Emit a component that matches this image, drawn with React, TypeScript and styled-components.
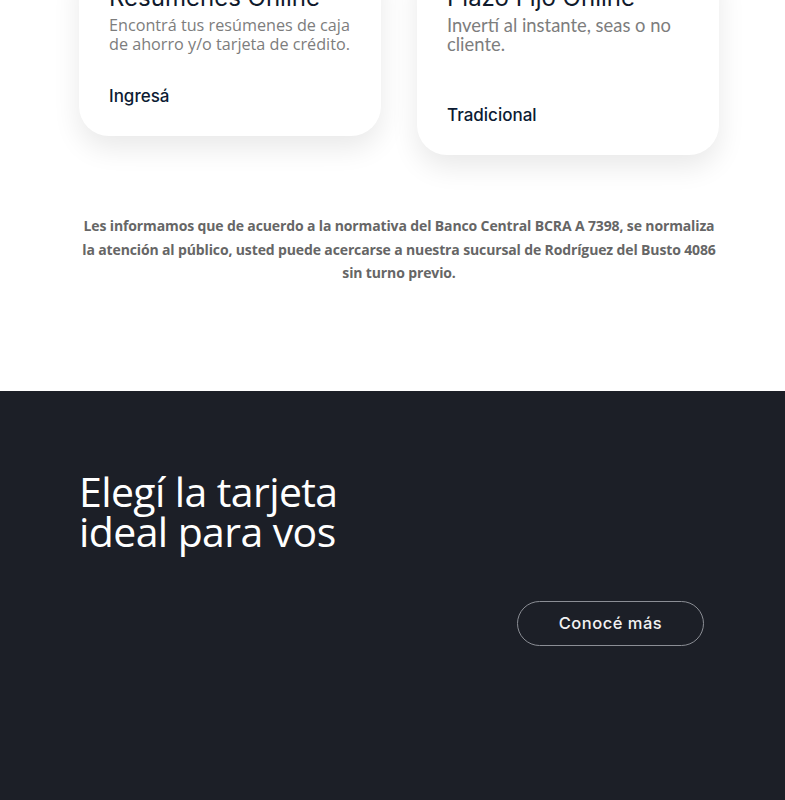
import styled, { createGlobalStyle } from 'styled-components';

const GlobalStyle = createGlobalStyle`
  html, body {
    margin: 0;
    padding: 0;
    background: #ffffff;
    overflow: hidden;
  }
  * {
    box-sizing: border-box;
  }
`;

const cards = [
  {
    title: 'Resúmenes Online',
    text: 'Encontrá tus resúmenes de caja de ahorro y/o tarjeta de crédito.',
    link: 'Ingresá',
    font: "'Open Sans', sans-serif",
    size: 16.2,
    gap: 29,
  },
  {
    title: 'Plazo Fijo Online',
    text: 'Invertí al instante, seas o no cliente.',
    link: 'Tradicional',
    font: "Lato, 'Open Sans', sans-serif",
    size: 18.4,
    gap: 48,
  },
];

const App = () => {
  return (
    <Page>
      <GlobalStyle />
      <TopSection>
        <CardRow>
          {cards.map((c) => (
            <Card key={c.title}>
              <CardTitle>{c.title}</CardTitle>
              <CardText $font={c.font} $size={c.size}>
                {c.text}
              </CardText>
              <CardLink href='#' $gap={c.gap}>
                {c.link}
              </CardLink>
            </Card>
          ))}
        </CardRow>
        <Notice>
          Les informamos que de acuerdo a la normativa del Banco Central BCRA A
          7398, se normaliza la atención al público, usted puede acercarse a
          nuestra sucursal de Rodríguez del Busto 4086 sin turno previo.
        </Notice>
      </TopSection>
      <DarkSection>
        <Inner>
          <Heading>
            Elegí la tarjeta
            <br />
            ideal para vos
          </Heading>
          <ButtonRow>
            <GhostButton>Conocé más</GhostButton>
          </ButtonRow>
        </Inner>
      </DarkSection>
    </Page>
  );
};

const Page = styled.div`
  width: 785px;
  min-height: 800px;
  background: #ffffff;
`;

const TopSection = styled.section`
  margin-top: -47px;
  padding: 0 66px 106px 79px;
`;

const CardRow = styled.div`
  display: flex;
  align-items: flex-start;
  gap: 36px;
`;

const Card = styled.div`
  width: 302px;
  background: #ffffff;
  border-radius: 30px;
  padding: 30px 20px 26px 30px;
  box-shadow: 0 12px 28px rgba(0, 0, 0, 0.09);
  display: flex;
  flex-direction: column;
`;

const CardTitle = styled.h3`
  margin: 0 0 4px;
  font-family: Inter, 'Noto Sans', sans-serif;
  font-weight: 400;
  font-size: 24px;
  line-height: 29px;
  color: #0f1a2c;
`;

const CardText = styled.p<{ $font: string; $size: number }>`
  margin: 0;
  font-family: ${(p) => p.$font};
  font-size: ${(p) => p.$size}px;
  line-height: 19px;
  color: #7d7d7d;
`;

const CardLink = styled.a<{ $gap: number }>`
  margin-top: ${(p) => p.$gap}px;
  font-family: Inter, 'Noto Sans', sans-serif;
  font-weight: 500;
  font-size: 17px;
  line-height: 27px;
  color: #0c1b33;
  text-decoration: none;
`;

const Notice = styled.p`
  margin: 59px 0 0;
  width: 640px;
  font-family: 'Open Sans', sans-serif;
  font-weight: 700;
  font-size: 14px;
  line-height: 23.5px;
  letter-spacing: -0.13px;
  text-align: center;
  color: #666666;
`;

const DarkSection = styled.section`
  background: #1c1f27;
  padding: 80px 66px 160px 79px;
`;

const Inner = styled.div`
  width: 640px;
`;

const Heading = styled.h2`
  margin: 0;
  font-family: 'Open Sans', sans-serif;
  font-weight: 400;
  font-size: 41px;
  line-height: 40px;
  letter-spacing: -0.6px;
  color: #ffffff;
`;

const ButtonRow = styled.div`
  display: flex;
  justify-content: flex-end;
  padding-right: 15px;
  margin-top: 50px;
`;

const GhostButton = styled.button`
  width: 187px;
  height: 45px;
  border: 1px solid #8b8e95;
  border-radius: 999px;
  background: transparent;
  font-family: Inter, 'Noto Sans', sans-serif;
  font-weight: 500;
  font-size: 16.5px;
  letter-spacing: 0.5px;
  color: #f2f2f2;
  cursor: pointer;
`;

export default App;
